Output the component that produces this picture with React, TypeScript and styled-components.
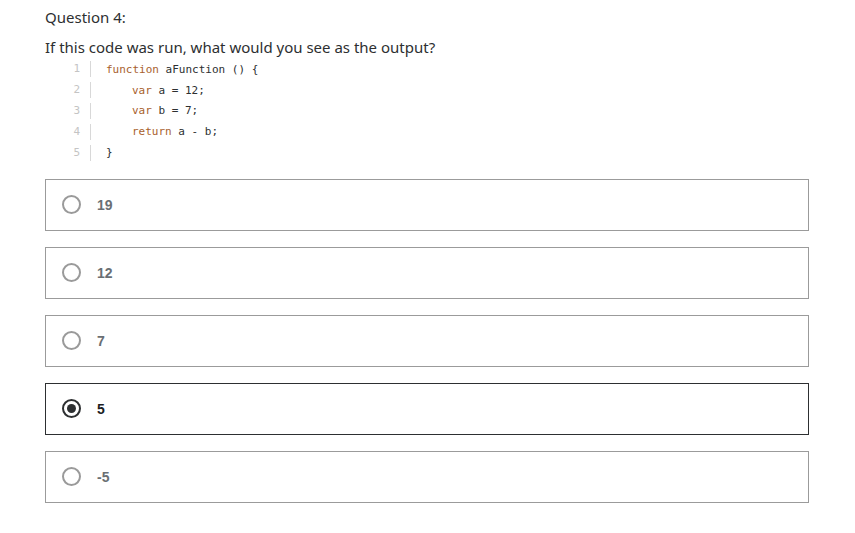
import styled, { createGlobalStyle } from "styled-components";

const GlobalStyle = createGlobalStyle`
  body {
    margin: 0;
    background: #fff;
    font-family: "Noto Sans", "Liberation Sans", sans-serif;
  }
`;

const Page = styled.div`
  padding: 5px 46px 0 45px;
  color: #2d2f31;
`;

const Title = styled.div`
  font-size: 15px;
  line-height: 24px;
  margin-bottom: 6px;
`;

const Prompt = styled.div`
  font-size: 15px;
  line-height: 24px;
`;

const Code = styled.div`
  margin: 0 0 16px 20px;
  font-family: "DejaVu Sans Mono", "Liberation Mono", monospace;
  font-size: 11px;
`;

const CodeLine = styled.div`
  display: flex;
  height: 20.8px;
  align-items: center;
`;

const LineNo = styled.span`
  width: 15px;
  text-align: right;
  color: #c4c4c4;
  padding-right: 10px;
  border-right: 1px solid #d8d8d8;
  height: 16px;
  line-height: 16px;
`;

const CodeText = styled.span<{ $indent: number }>`
  padding-left: ${({ $indent }) => 15 + $indent * 26}px;
  color: #2d2f31;
  white-space: pre;
`;

const Kw = styled.span`
  color: #a8612d;
`;

const Options = styled.div`
  display: flex;
  flex-direction: column;
  gap: 16px;
`;

const Option = styled.label<{ $selected: boolean }>`
  display: flex;
  align-items: center;
  height: 50px;
  border: 1px solid ${({ $selected }) => ($selected ? "#2d2f31" : "#9b9b9b")};
  padding-left: 16px;
  gap: 16px;
`;

const Radio = styled.span<{ $selected: boolean }>`
  box-sizing: border-box;
  width: 19px;
  height: 19px;
  border-radius: 50%;
  border: 2px solid ${({ $selected }) => ($selected ? "#2d2f31" : "#9a9a9a")};
  display: flex;
  align-items: center;
  justify-content: center;
  &::after {
    content: "";
    display: ${({ $selected }) => ($selected ? "block" : "none")};
    width: 9px;
    height: 9px;
    border-radius: 50%;
    background: #2d2f31;
  }
`;

const OptionText = styled.span<{ $selected: boolean }>`
  font-family: "Liberation Sans", Arial, sans-serif;
  font-weight: 700;
  font-size: 14px;
  color: ${({ $selected }) => ($selected ? "#1c1d1f" : "#6a6f73")};
`;

const codeLines: { indent: number; kw?: string; rest: string }[] = [
  { indent: 0, kw: "function", rest: " aFunction () {" },
  { indent: 1, kw: "var", rest: " a = 12;" },
  { indent: 1, kw: "var", rest: " b = 7;" },
  { indent: 1, kw: "return", rest: " a - b;" },
  { indent: 0, rest: "}" },
];

const answers = ["19", "12", "7", "5", "-5"];
const selected = "5";

const App = () => {
  return (
    <Page>
      <GlobalStyle />
      <Title>Question 4:</Title>
      <Prompt>If this code was run, what would you see as the output?</Prompt>
      <Code>
        {codeLines.map((line, index) => (
          <CodeLine key={index}>
            <LineNo>{index + 1}</LineNo>
            <CodeText $indent={line.indent}>
              {line.kw && <Kw>{line.kw}</Kw>}
              {line.rest}
            </CodeText>
          </CodeLine>
        ))}
      </Code>
      <Options>
        {answers.map((item) => (
          <Option key={item} $selected={item === selected}>
            <Radio $selected={item === selected} />
            <OptionText $selected={item === selected}>{item}</OptionText>
          </Option>
        ))}
      </Options>
    </Page>
  );
};

export default App;
